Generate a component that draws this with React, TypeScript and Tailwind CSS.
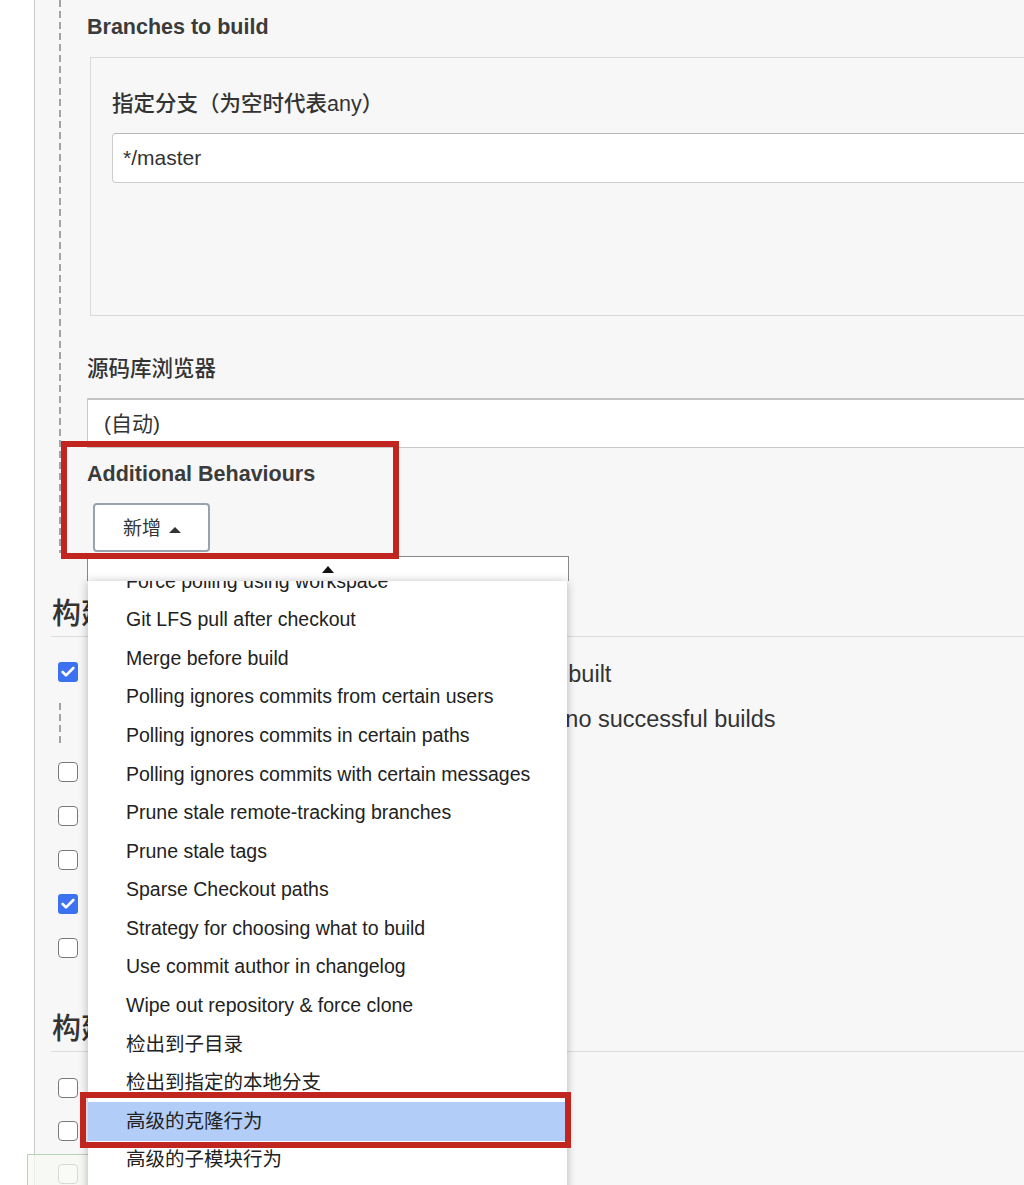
import { Check } from 'lucide-react'

const FONT = "font-['Liberation_Sans','Noto_Sans_CJK_SC',sans-serif]"

const BEHAVIOURS = [
  'Force polling using workspace',
  'Git LFS pull after checkout',
  'Merge before build',
  'Polling ignores commits from certain users',
  'Polling ignores commits in certain paths',
  'Polling ignores commits with certain messages',
  'Prune stale remote-tracking branches',
  'Prune stale tags',
  'Sparse Checkout paths',
  'Strategy for choosing what to build',
  'Use commit author in changelog',
  'Wipe out repository & force clone',
  '检出到子目录',
  '检出到指定的本地分支',
  '高级的克隆行为',
  '高级的子模块行为',
  '高级的拉取行为',
]

const ACTIVE_BEHAVIOUR = '高级的克隆行为'

const TRIGGERS = [
  { label: '触发远程构建 (例如,使用脚本)', checked: false },
  { label: 'Build after other projects are built', checked: false },
  { label: 'Build periodically', checked: false },
  { label: 'GitHub hook trigger for GITScm polling', checked: true },
  { label: 'Poll SCM', checked: false },
]

const ENVIRONMENT = [
  'Delete workspace before build starts',
  'Use secret text(s) or file(s)',
  'Abort the build if it’s stuck',
]

function Checkbox({ checked }: { checked?: boolean }) {
  if (checked) {
    return (
      <span className="w-[20px] h-[20px] shrink-0 rounded-[3px] bg-[#3c72f0] flex items-center justify-center">
        <Check size={16} strokeWidth={4} className="text-white" />
      </span>
    )
  }
  return <span className="w-[20px] h-[20px] shrink-0 rounded-[4px] border border-[#7a7a7a] bg-white" />
}

function DashedRail({ className = '' }: { className?: string }) {
  return (
    <div
      className={`w-[2px] shrink-0 bg-[repeating-linear-gradient(to_bottom,#a3a3a3_0px,#a3a3a3_7px,transparent_7px,transparent_11px)] ${className}`}
    />
  )
}

function UpTriangle({ size = 6, color = 'border-b-[#333]' }: { size?: number; color?: string }) {
  return (
    <span
      className={`inline-block w-0 h-0 border-x-transparent ${color} ${
        size === 6 ? 'border-x-[6px] border-b-[6px]' : 'border-x-[6px] border-b-[7px]'
      }`}
    />
  )
}

function SectionHeading({ children }: { children: React.ReactNode }) {
  return (
    <div className="pl-[1px] h-[43px] pb-[2px] border-b border-[#dcdcdc] text-[29px] leading-[40px] font-medium text-[#333]">
      {children}
    </div>
  )
}

function CheckRow({ label, checked, height = 'h-[44px]' }: { label: string; checked?: boolean; height?: string }) {
  return (
    <div className={`${height} pl-[7px] flex items-center gap-[10px] text-[23.5px] text-[#333] whitespace-nowrap`}>
      <Checkbox checked={checked} />
      <span className="pt-[5px]">{label}</span>
    </div>
  )
}

function GitSection() {
  return (
    <div className="flex">
      <DashedRail className="ml-[24px]" />
      <div className="pl-[26px] pt-[13px] pb-[1px] w-[1100px] shrink-0">
        <div className="h-[28px] leading-[28px] text-[21.5px] font-bold text-[#3b3b3b]">Branches to build</div>
        <div className="mt-[16px] ml-[3px] h-[259px] border border-[#d9d9d9] bg-[#f7f7f7] pl-[21px] pt-[32px]">
          <div className="h-[28px] leading-[28px] text-[21.5px] font-medium text-[#333]">指定分支（为空时代表any）</div>
          <div className="mt-[15px] h-[50px] rounded-[4px] border border-[#cccccc] border-t-[#b9b9b9] bg-white pl-[10px] flex items-center text-[21px] text-[#333]">
            */master
          </div>
        </div>
        <div className="mt-[39px] h-[28px] leading-[28px] text-[21.5px] font-medium text-[#333]">源码库浏览器</div>
        <div className="mt-[15px] h-[50px] border-l border-b border-[#c8c8c8] border-t-2 border-t-[#c4c4c4] bg-white pl-[16px] flex items-center text-[21px] text-[#333]">
          (自动)
        </div>
        <div className="mt-[12px] h-[28px] leading-[28px] text-[21.5px] font-bold text-[#3b3b3b]">
          Additional Behaviours
        </div>
        <button
          type="button"
          className="mt-[15px] ml-[6px] w-[117px] h-[49px] rounded-[4px] border-2 border-[#9aa3ad] bg-white pl-[28px] pt-[4px] flex items-center gap-[8px] text-[19px] text-[#333]"
        >
          <span>新增</span>
          <UpTriangle />
        </button>
      </div>
    </div>
  )
}

function TriggersSection() {
  return (
    <div className="mt-[41px] ml-[16px]">
      <SectionHeading>构建触发器</SectionHeading>
      <div className="pt-[13px]">
        <CheckRow label="Build whenever a SNAPSHOT dependency is built" checked />
        <div className="mt-[9px] ml-[8px] flex">
          <DashedRail />
          <div className="h-[44px] pb-[10px] pl-[38px] flex items-center gap-[10px] text-[23.5px] text-[#333] whitespace-nowrap">
            <Checkbox />
            <span>Schedule build when some upstream has no successful builds</span>
          </div>
        </div>
        <div className="mt-[3px]">
          {TRIGGERS.map((t) => (
            <CheckRow key={t.label} label={t.label} checked={t.checked} />
          ))}
        </div>
      </div>
    </div>
  )
}

function EnvironmentSection() {
  return (
    <div className="mt-[39px] ml-[16px]">
      <SectionHeading>构建环境</SectionHeading>
      <div className="pt-[14px]">
        {ENVIRONMENT.map((label) => (
          <CheckRow key={label} label={label} height="h-[43px]" />
        ))}
      </div>
    </div>
  )
}

function BehaviourMenu() {
  return (
    <div className="absolute left-[87px] top-[556px] w-[482px] z-20">
      <div className="h-[25px] border border-b-0 border-[#888] bg-white flex items-center justify-center">
        <UpTriangle size={7} color="border-b-[#111]" />
      </div>
      <div className="ml-[1px] w-[479px] h-[640px] bg-white overflow-hidden shadow-[0_1px_9px_rgba(0,0,0,0.28)]">
        <div className="-mt-[18.9px]">
          {BEHAVIOURS.map((item) => (
            <div
              key={item}
              className={`h-[38.57px] pl-[38px] flex items-center text-[19.5px] text-[#222] whitespace-nowrap ${
                item === ACTIVE_BEHAVIOUR ? 'bg-[#b3cdf9]' : ''
              }`}
            >
              {item}
            </div>
          ))}
        </div>
      </div>
    </div>
  )
}

export default function App() {
  return (
    <div className={`relative w-[1024px] h-[1185px] overflow-hidden bg-[#f7f7f7] flex ${FONT}`}>
      <div className="w-[35px] shrink-0 bg-white border-r border-[#c9c9c9]" />
      <div className="flex-1 min-w-0 flex flex-col">
        <GitSection />
        <TriggersSection />
        <EnvironmentSection />
      </div>

      {/* floating save bar, mostly under the menu */}
      <div className="absolute left-[27px] top-[1154px] w-[320px] h-[60px] border border-[#b6d4b4] bg-[#f5f9f3]/75 z-10" />

      <BehaviourMenu />

      {/* annotation boxes */}
      <div className="absolute left-[61px] top-[441px] w-[338px] h-[118px] border-[6px] border-[#c0261f] z-30" />
      <div className="absolute left-[80px] top-[1092px] w-[491px] h-[56px] border-[6px] border-[#c0261f] z-30" />
    </div>
  )
}
